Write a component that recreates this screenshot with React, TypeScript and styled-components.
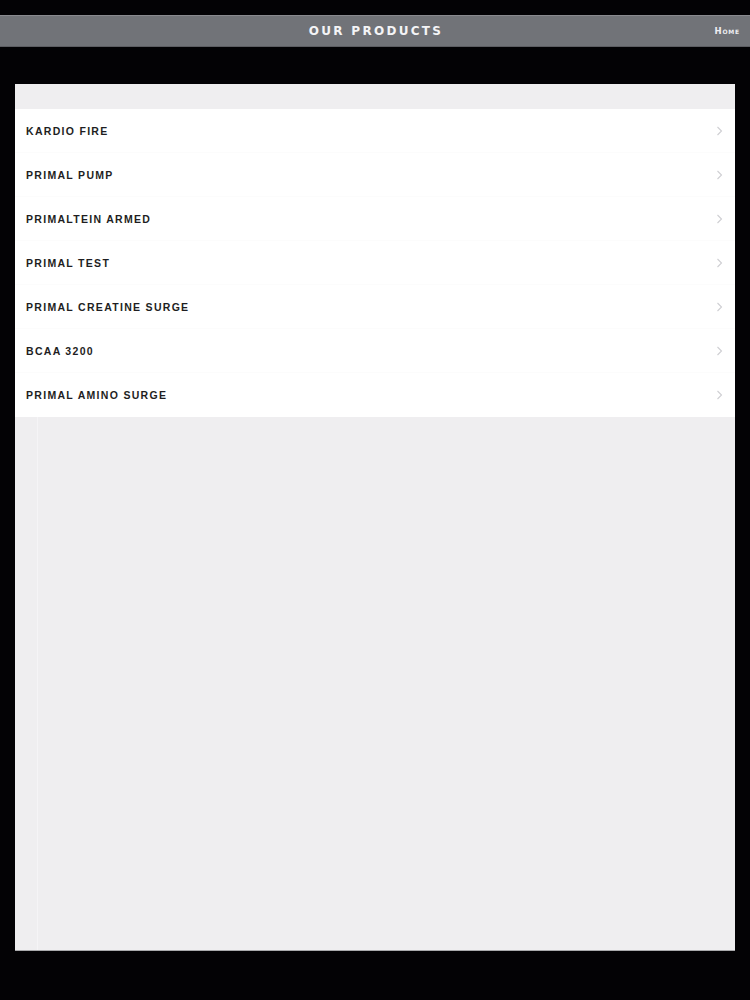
import React from "react";
import styled, { createGlobalStyle } from "styled-components";

const GlobalStyle = createGlobalStyle`
  html, body {
    margin: 0;
    padding: 0;
    background: #000;
  }
  body {
    font-family: "Liberation Sans", Arial, sans-serif;
  }
`;

const Page = styled.div`
  width: 750px;
  height: 1000px;
  background: #030205;
  padding-top: 15px;
  box-sizing: border-box;
  display: flex;
  flex-direction: column;
`;

const NavBar = styled.header`
  height: 32px;
  box-sizing: border-box;
  background: #717378;
  border-top: 1px solid #898a8f;
  border-bottom: 1px solid #5c5d62;
  display: grid;
  grid-template-columns: 1fr auto 1fr;
  align-items: center;
`;

const Title = styled.h1`
  grid-column: 2;
  margin: 0;
  font-family: "DejaVu Sans", sans-serif;
  font-weight: 700;
  font-size: 12px;
  letter-spacing: 2.3px;
  color: #f4f4f6;
  padding-left: 2px;
`;

const HomeLink = styled.a`
  grid-column: 3;
  justify-self: end;
  margin-right: 10px;
  font-family: "DejaVu Sans", sans-serif;
  font-weight: 700;
  font-size: 8.5px;
  font-variant: small-caps;
  letter-spacing: 0.8px;
  color: #eeeef2;
  text-decoration: none;
`;

const Panel = styled.main`
  margin: 37px 15px 0;
  height: 867px;
  box-sizing: border-box;
  background: #efeef0;
  border-bottom: 1px solid #a9a9ac;
  display: flex;
  flex-direction: column;
`;

const TopStrip = styled.div`
  height: 25px;
  background: #efeef0;
`;

const List = styled.ul`
  list-style: none;
  margin: 0;
  padding: 0;
  background: #fff;
`;

const Row = styled.li`
  height: 44px;
  display: flex;
  align-items: center;
  justify-content: space-between;
  padding: 0 12px 0 11px;
  box-sizing: border-box;
  border-bottom: 1px solid #fcfcfc;
  &:last-child {
    border-bottom: none;
  }
`;

const Label = styled.span`
  font-family: "Liberation Sans", Arial, sans-serif;
  font-weight: 700;
  font-size: 10.5px;
  letter-spacing: 1.3px;
  color: #1e1e22;
`;

const Filler = styled.div`
  flex: 1;
  background: #efeef0;
  margin-left: 22px;
  border-left: 1px solid #f5f4f6;
`;

const Chevron = () => (
  <svg width="7" height="12" viewBox="0 0 7 12">
    <path d="M1.5 2 L5.5 6 L1.5 10" fill="none" stroke="#cfcfd3" strokeWidth="1.1" />
  </svg>
);

const products = [
  "KARDIO FIRE",
  "PRIMAL PUMP",
  "PRIMALTEIN ARMED",
  "PRIMAL TEST",
  "PRIMAL CREATINE SURGE",
  "BCAA 3200",
  "PRIMAL AMINO SURGE",
];

export default function App() {
  return (
    <>
      <GlobalStyle />
      <Page>
        <NavBar>
          <Title>OUR PRODUCTS</Title>
          <HomeLink href="#">Home</HomeLink>
        </NavBar>
        <Panel>
          <TopStrip />
          <List>
            {products.map((p) => (
              <Row key={p}>
                <Label>{p}</Label>
                <Chevron />
              </Row>
            ))}
          </List>
          <Filler />
        </Panel>
      </Page>
    </>
  );
}
